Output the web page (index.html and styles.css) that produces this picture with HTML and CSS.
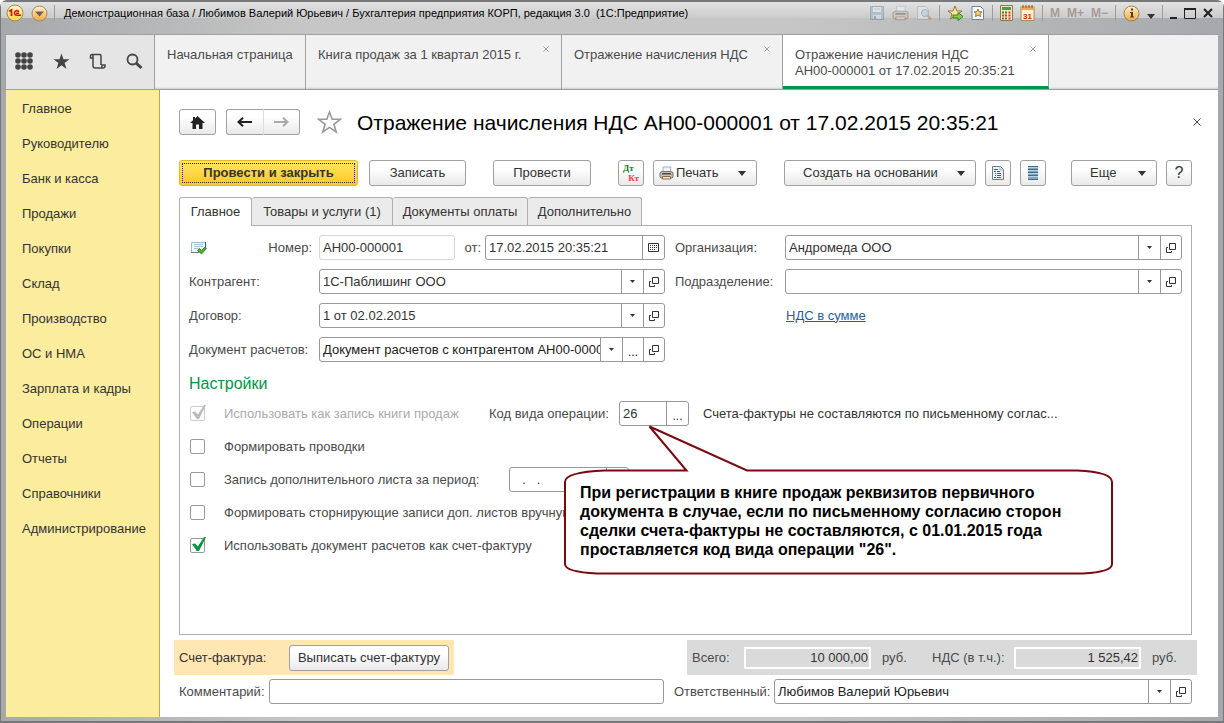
FILE: index.html
```html
<!DOCTYPE html>
<html lang="ru">
<head>
<meta charset="utf-8">
<title>Отражение начисления НДС</title>
<link rel="stylesheet" href="styles.css">
</head>
<body>
<svg width="0" height="0" class="defs" aria-hidden="true">
  <symbol id="open" viewBox="0 0 10 10"><path d="M3.500.5h6v6h-6zM2 4.500H.5v5h5V8" fill="none" stroke="#333"/></symbol>
  <symbol id="down" viewBox="0 0 5 3"><path d="M0 0h5L2.500 3z" fill="#333"/></symbol>
  <symbol id="down-big" viewBox="0 0 8 5"><path d="M0 0h8L4 5z" fill="#333"/></symbol>
  <symbol id="printer" viewBox="0 0 15 14"><path d="M4 1h8l-1 6H4z" fill="#eef4fa" stroke="#9db4c8"/><path d="M1 6.500l2-1h9l2 1V11l-1 1H2l-1-1z" fill="#c9c4bd" stroke="#77716b"/><path d="M3 7h9v1.500H3z" fill="#4b4744"/><path d="M3.500 10.500h8v2.500h-8z" fill="#f5e3d0" stroke="#8b6a50"/><path d="M12 9h1" stroke="#e08030"/></symbol>
  <symbol id="cross" viewBox="0 0 8 8"><path d="M.5.5l7 7M7.500.5l-7 7" fill="none" stroke="currentColor"/></symbol>
</svg>
<div class="window">
  <header class="titlebar">
    <svg class="logo" width="18" height="18" viewBox="0 0 18 18"><defs><linearGradient id="gy" x2="0" y2="1"><stop offset="0" stop-color="#fffbd0"/><stop offset="1" stop-color="#fbd43c"/></linearGradient><linearGradient id="go" x2="0" y2="1"><stop offset="0" stop-color="#fff0d0"/><stop offset="1" stop-color="#f5a83c"/></linearGradient></defs><circle cx="9" cy="9" r="8" fill="url(#gy)" stroke="#a08a60"/><path d="M3 7.200L5.500 6v6" fill="none" stroke="#e01010" stroke-width="1.800"/><path d="M12.800 7.700q-1.300-1.500-3-.9-1.700.9-1.300 2.700.5 1.700 2.200 1.700H15M10 9.200h3" fill="none" stroke="#e01010" stroke-width="1.500"/></svg>
    <svg class="menu-ball" width="17" height="17" viewBox="0 0 17 17"><circle cx="8.500" cy="8.500" r="7.500" fill="url(#go)" stroke="#a08a60"/><path d="M4 6.500h9l-4.500 5z" fill="#6b6252"/></svg>
    <i class="sep"></i>
    <span class="caption">Демонстрационная база / Любимов Валерий Юрьевич / Бухгалтерия предприятия КОРП, редакция 3.0&nbsp; (1С:Предприятие)</span>
    <div class="sys">
      <svg class="dim" width="16" height="16" viewBox="0 0 16 16"><path d="M1.500 1.500h13v13h-13z" fill="#8fa9bf" stroke="#56799a"/><path d="M4 2h8v5H4z" fill="#e8eef4"/><path d="M4 10h8v4H4z" fill="#dce4ea"/><path d="M5 11h2v3H5z" fill="#56799a"/><path d="M5 4h6" stroke="#9ab"/></svg>
      <svg class="dim" width="17" height="16"><use href="#printer"/></svg>
      <svg class="dim" width="16" height="16" viewBox="0 0 16 16"><path d="M1.500 1.500h8l3 3v10h-11z" fill="#e8eef4" stroke="#8aa0b4"/><circle cx="9" cy="8" r="3.500" fill="#b8d0e4" stroke="#6d8ba5"/><path d="M11.500 10.500l3.500 4" stroke="#b07840" stroke-width="2"/></svg>
      <i class="sep"></i>
      <svg width="17" height="17" viewBox="0 0 17 17"><path d="M8 1l2 5h5l-4 3 1.500 5L8 11l-4.500 3L5 9 1 6h5z" fill="#ffe79a" stroke="#94743a"/><path d="M6 10h5V7.500l5 4-5 4V13H6z" fill="#7fd04a" stroke="#3f7d22"/></svg>
      <svg width="14" height="16" viewBox="0 0 14 16"><path d="M1 1.500h8.500l3 3v10H1z" fill="#fff" stroke="#5f86a6"/><path d="M7 4l1.200 2.800h2.800L8.800 8.700l.8 3L7 10l-2.600 1.700.8-3L3 6.800h2.800z" fill="#ffd878" stroke="#94743a"/></svg>
      <i class="sep"></i>
      <svg width="13" height="16" viewBox="0 0 13 16"><path d="M.5.5h12v15H.5z" fill="#f3e9bb" stroke="#8a7a52"/><path d="M2 2h9v3H2z" fill="#4d9a4a"/><path d="M3 6.500v8M6 6.500v8" stroke="#8a5c3a" stroke-width="2" stroke-dasharray="2 1"/><path d="M9.500 6.500v8" stroke="#d33" stroke-width="2" stroke-dasharray="2 1"/></svg>
      <svg width="15" height="16" viewBox="0 0 15 16"><path d="M1 1.500h13v14H1z" fill="#fff3d2" stroke="#b08850"/><path d="M1 1h13v4H1z" fill="#e8a860"/><path d="M3 0v3M6 0v3M9 0v3M12 0v3" stroke="#7c5a30"/><text x="7.500" y="13.500" text-anchor="middle" class="cal-text">31</text></svg>
      <i class="sep"></i>
      <b class="mem">M</b><b class="mem">M+</b><b class="mem">M−</b>
      <i class="sep"></i>
      <svg width="17" height="17" viewBox="0 0 17 17"><circle cx="8.500" cy="8.500" r="7.500" fill="url(#go)" stroke="#9c8250"/><path d="M8 3.500h2v2H8zM7 7h3v4.500h1v1H7v-1h1V8H7z" fill="#4a4028"/></svg>
      <svg class="sys-down" width="8" height="5"><use href="#down-big"/></svg>
      <i class="sep"></i>
      <svg class="win-min" width="7" height="12"><path d="M0 10h7v2H0z" fill="#222"/></svg>
      <svg width="12" height="11" viewBox="0 0 12 11"><path d="M.5 1h11v9.500H.5z" fill="none" stroke="#222"/><path d="M0 1h12" stroke="#222" stroke-width="2"/></svg>
      <svg width="10" height="10" viewBox="0 0 10 10"><path d="M1 1l8 8M9 1L1 9" stroke="#222" stroke-width="2"/></svg>
    </div>
  </header>

  <div class="topbar">
    <div class="tools">
      <svg width="18" height="18" viewBox="0 0 18 18" fill="#444"><circle cx="3" cy="3" r="2.800"/><circle cx="9" cy="3" r="2.800"/><circle cx="15" cy="3" r="2.800"/><circle cx="3" cy="9" r="2.800"/><circle cx="9" cy="9" r="2.800"/><circle cx="15" cy="9" r="2.800"/><circle cx="3" cy="15" r="2.800"/><circle cx="9" cy="15" r="2.800"/><circle cx="15" cy="15" r="2.800"/></svg>
      <svg width="17" height="17" viewBox="0 0 17 17"><path d="M8.500.5l2 5.800h6l-4.900 3.700 1.900 6-5-3.700-5 3.700 1.900-6L.5 6.300h6z" fill="#444"/></svg>
      <svg width="17" height="17" viewBox="0 0 17 17" fill="none" stroke="#444" stroke-width="1.500"><path d="M4 5H1.500V3Q1.500 1.500 3 1.500h8Q12 1.500 12 3v9M4 5V2M4 5v7.500Q4 15 6 15h8q2 0 2-2v-1h-3v1.500q0 1.500-1 1.500"/></svg>
      <svg width="17" height="17" viewBox="0 0 17 17" fill="none" stroke="#444"><circle cx="6.500" cy="6.500" r="5" stroke-width="1.800"/><path d="M10 10l5.500 5" stroke-width="3"/></svg>
    </div>
    <nav class="tabs">
      <a class="tab t1" href="#">Начальная страница</a>
      <a class="tab t2" href="#">Книга продаж за 1 квартал 2015 г.<svg class="x" width="6" height="6"><use href="#cross"/></svg></a>
      <a class="tab t3" href="#">Отражение начисления НДС<svg class="x" width="6" height="6"><use href="#cross"/></svg></a>
      <a class="tab t4 active" href="#">Отражение начисления НДС<br>АН00-000001 от 17.02.2015 20:35:21<svg class="x" width="6" height="6"><use href="#cross"/></svg></a>
    </nav>
  </div>

  <div class="body">
    <nav class="side">
      <a href="#">Главное</a><a href="#">Руководителю</a><a href="#">Банк и касса</a><a href="#">Продажи</a><a href="#">Покупки</a><a href="#">Склад</a><a href="#">Производство</a><a href="#">ОС и НМА</a><a href="#">Зарплата и кадры</a><a href="#">Операции</a><a href="#">Отчеты</a><a href="#">Справочники</a><a href="#">Администрирование</a>
    </nav>

    <main>
      <div class="head">
        <button class="btn home" aria-label="Домой"><svg width="15" height="13" viewBox="0 0 15 13"><path d="M7.500 0L15 7h-2.500v6H9V8.500H6V13H2.500V7H0L3 4.200V1h2v1.400z" fill="#222"/></svg></button>
        <div class="nav">
          <button class="btn" aria-label="Назад"><svg width="15" height="10" viewBox="0 0 15 10"><path d="M1 5h14M6 .8L1.500 5 6 9.200" fill="none" stroke="#222" stroke-width="2"/></svg></button>
          <button class="btn" aria-label="Вперед"><svg width="15" height="10" viewBox="0 0 15 10"><path d="M0 5h14M9 .8L13.500 5 9 9.200" fill="none" stroke="#aaa" stroke-width="2"/></svg></button>
        </div>
        <svg class="fav" width="25" height="24" viewBox="0 0 25 24"><path d="M12.500 2l2.700 7.300h8l-6.300 5 2.300 7.700-6.700-4.600L5.800 22l2.300-7.700-6.300-5h8z" fill="#fff" stroke="#999" stroke-width="1.600"/></svg>
        <h1>Отражение начисления НДС АН00-000001 от 17.02.2015 20:35:21</h1>
        <button class="close" aria-label="Закрыть"><svg width="8" height="8"><use href="#cross"/></svg></button>
      </div>

      <div class="toolbar">
        <button class="btn primary">Провести и закрыть</button>
        <button class="btn save">Записать</button>
        <button class="btn post">Провести</button>
        <button class="btn sq dtkt" aria-label="Дт Кт"><span class="dt">Дт</span><span class="kt">Кт</span></button>
        <button class="btn print"><svg width="15" height="14"><use href="#printer"/></svg>Печать<svg class="arr" width="8" height="5"><use href="#down-big"/></svg></button>
        <button class="btn create">Создать на основании<svg class="arr" width="8" height="5"><use href="#down-big"/></svg></button>
        <button class="btn sq" aria-label="Отчет"><svg width="12" height="14" viewBox="0 0 12 14"><path d="M.5.5h8l3 3v10H.5z" fill="#e9f2f8" stroke="#5d8199"/><path d="M8 0v4h4" fill="none" stroke="#8fb0c5"/><path d="M2 3.500h4M2 5.500h2m1 0h3M3 7.500h1m1 0h4M3 9.500h1m1 0h4M2 11.500h2m1 0h4" stroke="#3d637c"/></svg></button>
        <button class="btn sq" aria-label="Список"><svg width="10" height="14" viewBox="0 0 10 14"><path d="M0 0h10v14H0z" fill="#7fa9c2"/><path d="M0 .5h10M0 3.500h10M0 6.500h10M0 9.500h10M0 13.500h10" stroke="#446a84"/><path d="M0 1.500h10M0 4.500h10M0 7.500h10M0 10.500h10" stroke="#b7d3e3"/></svg></button>
        <button class="btn more">Еще<svg class="arr" width="8" height="5"><use href="#down-big"/></svg></button>
        <button class="btn sq help">?</button>
      </div>

      <div class="ptabs">
        <button class="pt p1 on">Главное</button><button class="pt p2">Товары и услуги (1)</button><button class="pt p3">Документы оплаты</button><button class="pt p4">Дополнительно</button>
      </div>

      <section class="panel">
        <div class="cols">
          <div class="col left">
            <div class="row">
              <span class="numlabel"><svg width="16" height="14" viewBox="0 0 16 14"><path d="M.5 11.500v-10h14v6" fill="#eef6fb" stroke="#9fbccb"/><path d="M14.500 1v7" stroke="#456"/><path d="M0 11.500h8" stroke="#678"/><path d="M3 3.500h9M3 5.500h9M3 7.500h5" stroke="#a8c4d2"/><path d="M6.500 9.500l2-2 2 2 3.500-3.500 1.500 1.500-5 5.500z" fill="#4cae2c" stroke="#2e7d1a" stroke-width=".8"/></svg><label for="num">Номер:</label></span>
              <span class="field ro num"><input id="num" value="АН00-000001" readonly></span>
              <label class="from" for="date">от:</label>
              <span class="field grow"><input id="date" value="17.02.2015 20:35:21"><button aria-label="Календарь"><svg width="11" height="9" viewBox="0 0 11 9"><path d="M.5.5h10v8H.5z" fill="none" stroke="#333"/><path d="M2 2.500h7M2 4.500h7M2 6.500h5" stroke="#333" stroke-dasharray="1 1"/></svg></button></span>
            </div>
            <div class="row"><label for="contr">Контрагент:</label><span class="field grow"><input id="contr" value="1С-Паблишинг ООО"><button aria-label="Выбрать"><svg width="5" height="3"><use href="#down"/></svg></button><button aria-label="Открыть"><svg width="10" height="10"><use href="#open"/></svg></button></span></div>
            <div class="row"><label for="dog">Договор:</label><span class="field grow"><input id="dog" value="1 от 02.02.2015"><button aria-label="Выбрать"><svg width="5" height="3"><use href="#down"/></svg></button><button aria-label="Открыть"><svg width="10" height="10"><use href="#open"/></svg></button></span></div>
            <div class="row"><label for="doc">Документ расчетов:</label><span class="field grow dark"><input id="doc" value="Документ расчетов с контрагентом АН00-000001"><button aria-label="Выбрать"><svg width="5" height="3"><use href="#down"/></svg></button><button class="dots">...</button><button aria-label="Открыть"><svg width="10" height="10"><use href="#open"/></svg></button></span></div>
          </div>
          <div class="col right">
            <div class="row"><label for="org">Организация:</label><span class="field grow"><input id="org" value="Андромеда ООО"><button aria-label="Выбрать"><svg width="5" height="3"><use href="#down"/></svg></button><button aria-label="Открыть"><svg width="10" height="10"><use href="#open"/></svg></button></span></div>
            <div class="row"><label for="dep">Подразделение:</label><span class="field grow"><input id="dep"><button aria-label="Выбрать"><svg width="5" height="3"><use href="#down"/></svg></button><button aria-label="Открыть"><svg width="10" height="10"><use href="#open"/></svg></button></span></div>
            <div class="row link-row"><a href="#">НДС в сумме</a></div>
          </div>
        </div>

        <h2>Настройки</h2>
        <div class="settings">
          <div class="srow">
            <label class="check off first"><input type="checkbox" checked disabled>Использовать как запись книги продаж</label>
            <label class="codelabel" for="code">Код вида операции:</label>
            <span class="field code"><input id="code" value="26"><button class="dots">...</button></span>
            <span class="codetext">Счета-фактуры не составляются по письменному соглас...</span>
          </div>
          <div class="srow"><label class="check"><input type="checkbox">Формировать проводки</label></div>
          <div class="srow"><label class="check third"><input type="checkbox">Запись дополнительного листа за период:</label><span class="field period"><input aria-label="Период" value="  .   ."><button aria-label="Календарь"></button></span></div>
          <div class="srow"><label class="check"><input type="checkbox">Формировать сторнирующие записи доп. листов вручную</label></div>
          <div class="srow"><label class="check"><input type="checkbox" checked>Использовать документ расчетов как счет-фактуру</label></div>
          <div class="callout">
            <svg width="552" height="152" viewBox="0 0 552 152"><path d="M86.500 2.500L123.500 46.500H42Q2 48 2 58V140Q2 148 34 149.500H520Q549 148 549 140V58Q549 48 514 46.500H184z" fill="#fff" stroke="#7b0a10" stroke-width="2"/></svg>
            <p>При регистрации в книге продаж реквизитов первичного<br>документа в случае, если по письменному согласию сторон<br>сделки счета-фактуры не составляются, с 01.01.2015 года<br>проставляется код вида операции "26".</p>
          </div>
        </div>
      </section>

      <div class="totals">
        <div class="invoice"><span>Счет-фактура:</span><button class="btn">Выписать счет-фактуру</button></div>
        <div class="sums"><label class="l1" for="sum">Всего:</label><input id="sum" value="10 000,00" readonly><span class="r1">руб.</span><label class="l2" for="vat">НДС (в т.ч.):</label><input id="vat" value="1 525,42" readonly><span>руб.</span></div>
      </div>
      <div class="bottom">
        <div class="row comment"><label for="com">Комментарий:</label><span class="field grow"><input id="com"></span></div>
        <div class="row resp"><label for="resp">Ответственный:</label><span class="field grow dark"><input id="resp" value="Любимов Валерий Юрьевич"><button aria-label="Выбрать"><svg width="5" height="3"><use href="#down"/></svg></button><button aria-label="Открыть"><svg width="10" height="10"><use href="#open"/></svg></button></span></div>
      </div>
    </main>
  </div>
</div>
</body>
</html>
```
FILE: styles.css
```css
* { box-sizing: border-box; }
body { margin: 0; background: #fff; font: 13px/16px "Liberation Sans", Arial, sans-serif; color: #4a4a4a; }
button, input { font: inherit; color: inherit; }
a { color: inherit; text-decoration: none; }
svg { flex: none; display: block; }
.defs { position: absolute; }
.window { min-height: 100vh; display: flex; flex-direction: column; border: 1px solid #77787a; border-width: 2px 1px; border-radius: 7px 7px 0 0; padding: 0 5px 4px 5px; background: linear-gradient(90deg, #a6a8ab, #c6c6c6 25%, #c6c6c6 65%, #a6a8ab); }

.titlebar { display: flex; align-items: center; height: 32px; margin: 0 -5px; padding: 0 10px 10px 5px; background: linear-gradient(180deg, #e2e2e2, #cbcbcb 16px, #fff0 16px); }
.menu-ball { margin-left: 7px; }
.sep { width: 1px; height: 16px; background: #9c9c9c; flex: none; }
.titlebar > .sep { margin: 0 9px 0 6px; }
.caption { color: #000; font-size: 11px; white-space: nowrap; }
.sys { margin-left: auto; display: flex; align-items: center; gap: 7px; }
.dim { opacity: .45; }
.cal-text { font: bold 8px "Liberation Sans", sans-serif; fill: #e02020; }
.mem { color: #a89c98; font-size: 12px; }
.sys-down { margin-top: 7px; }

.topbar { display: flex; border: 1px solid #a0a0a0; border-width: 1px 0 1px 1px; height: 56px; background: #f1f1f1; margin-left: -1px; }
.tools { width: 148px; display: flex; align-items: center; justify-content: space-between; padding: 0 11px 2px 9px; background: #e5e5e5; }
.tabs { display: flex; flex: 1; border-left: 1px solid #a0a0a0; box-shadow: inset 0 -3px 2px -2px #ccc; }
.tab { position: relative; padding: 12px 12px 0; border-right: 1px solid #a0a0a0; white-space: nowrap; }
.t1 { width: 151px; }
.t2 { width: 256px; }
.t3 { width: 221px; }
.t4 { width: 266px; }
.tab.active { background: #fff; border-bottom: 3px solid #009646; }
.x { position: absolute; top: 11px; right: 12px; color: #888; }

.body { flex: 1; display: flex; background: #fff; }
.side { width: 154px; flex: none; display: flex; flex-direction: column; padding-top: 2px; background: #fbec9e; border-right: 1px solid #c4a83c; color: #333; }
.side a { padding: 9px 0 10px 16px; }
main { flex: 1; min-width: 0; display: flex; flex-direction: column; padding: 18px 26px 13px 19px; }

.btn { display: inline-flex; align-items: center; justify-content: center; height: 26px; padding: 0 10px; border: 1px solid #a0a0a0; border-radius: 3px; background: linear-gradient(#fff 30%, #e9e9e9); color: #333; white-space: nowrap; }
.head { display: flex; align-items: center; height: 28px; }
.home { width: 37px; margin-right: 10px; }
.nav { display: flex; width: 74px; }
.nav .btn { flex: 1; }
.nav .btn:first-child { border-radius: 3px 0 0 3px; border-right-color: #ddd; }
.nav .btn:last-child { border-radius: 0 3px 3px 0; border-left: 0; }
.fav { margin: 0 15px 0 17px; }
h1 { margin: 1px 0 0; font-size: 21px; line-height: 24px; font-weight: normal; color: #000; white-space: nowrap; }
.close { margin: 0 -9px 0 auto; padding: 0; border: 0; background: none; color: #444; }

.toolbar { display: flex; margin-top: 24px; }
.primary { width: 179px; margin-right: 11px; font-weight: bold; border-color: #e8b628; background: linear-gradient(#ffe760, #fbc926); outline: 1px dotted #222; outline-offset: -4px; }
.save { width: 97px; margin-right: 27px; }
.post { width: 98px; margin-right: 27px; }
.sq { width: 26px; padding: 0; margin-right: 9px; }
.dtkt { display: flex; flex-direction: column; font: bold 9px/10px "Liberation Serif", serif; }
.dt { color: #187a10; align-self: flex-start; padding-left: 4px; }
.kt { color: #f03c3c; align-self: flex-end; padding-right: 4px; }
.print { width: 104px; margin-right: 27px; padding: 0 10px 0 5px; }
.print svg:first-child { margin-right: 2px; }
.arr { margin-left: auto; }
.create { width: 192px; margin-right: 9px; padding: 0 10px 0 18px; }
.more { width: 86px; margin: 0 9px 0 auto; padding: 0 10px 0 18px; }
.help { margin: 0; font-size: 16px; }

.ptabs { display: flex; margin-top: 11px; }
.pt { height: 28px; padding: 0; border: 1px solid #b0b0b0; border-left-width: 0; border-bottom: 0; border-radius: 3px 3px 0 0; background: #ebebeb; color: #333; }
.pt.on { position: relative; border-left-width: 1px; background: #fff; height: 29px; margin-bottom: -1px; }
.p1 { width: 73px; }
.p2 { width: 141px; }
.p3 { width: 135px; }
.p4 { width: 114px; }
.panel { flex: 1; border: 1px solid #b0b0b0; padding: 9px 9px 0; }
.cols { display: grid; grid-template-columns: 476px 1fr; gap: 10px; }
.col { display: grid; gap: 9px; align-content: start; }
.row { display: flex; align-items: center; height: 25px; min-width: 0; }
.left > .row > :first-child { width: 130px; flex: none; }
.right > .row > label { width: 110px; flex: none; }
.numlabel { display: flex; align-items: center; justify-content: space-between; padding: 0 7px 0 2px; }
.from { width: 30px; text-align: right; padding-right: 4px; }
.field { display: flex; height: 25px; border: 1px solid #999; border-radius: 3px; background: #fff; color: #333; overflow: hidden; }
.field input { flex: 1; min-width: 0; width: 100%; border: 0; padding: 0 0 0 3px; background: none; outline: 0; }
.field button { width: 22px; flex: none; padding: 0; border: 0; border-left: 1px solid #999; background: none; display: flex; align-items: center; justify-content: center; }
.field button + button { width: 21px; }
.field .dots { padding-top: 4px; font-size: 12px; }
.dark { color: #222; }
.grow { flex: 1; min-width: 0; }
.ro { border-color: #d6d6d6; }
.num { width: 136px; }
.link-row { padding-left: 111px; }
.link-row a { color: #1a5fa8; text-decoration: underline; }
h2 { margin: 12px 0 7px; font-size: 16px; line-height: 20px; font-weight: normal; color: #009646; }

.settings { position: relative; display: grid; gap: 8px; }
.srow { display: flex; align-items: center; height: 25px; white-space: nowrap; }
.check { display: flex; align-items: center; }
.check input { appearance: none; position: relative; width: 15px; height: 15px; margin: 0 19px 0 1px; border: 1px solid #999; border-radius: 2px; background: #fff; }
.check input:checked::after { content: ""; position: absolute; left: 1px; top: -2px; width: 14px; height: 14px; background: #009646; clip-path: polygon(0 50%, 22% 46%, 42% 68%, 86% 0, 100% 0, 50% 100%, 34% 100%); }
.off { color: #aaa; }
.off input { border-color: #ccc; }
.check.off input:checked::after { background: #bbb; }
.first { width: 300px; }
.codelabel { width: 130px; }
.code { width: 70px; margin-right: 14px; }
.third { width: 320px; }
.period { width: 120px; }
.period input { padding-left: 5px; white-space: pre; }
.codetext { color: #333; }
.callout { position: absolute; left: 374px; top: 23px; width: 552px; }
.callout p { position: absolute; left: 17px; top: 59px; margin: 0; font-size: 16px; line-height: 19px; font-weight: bold; color: #000; white-space: nowrap; }

.totals { display: flex; justify-content: space-between; margin: 5px -5px 0 -5px; height: 35px; }
.invoice { display: flex; align-items: center; justify-content: space-between; width: 280px; padding: 0 5px; background: #ffe6b3; color: #333; }
.invoice .btn { width: 160px; }
.sums { display: flex; align-items: center; width: 510px; padding-left: 5px; background: #dadada; }
.sums input { width: 127px; height: 22px; padding: 0 1px; border: 2px solid #fff; background: #dadada; text-align: right; color: #333; margin-right: 11px; }
.l1 { width: 52px; }
.l2 { width: 82px; }
.r1 { width: 50px; }
.bottom { display: flex; gap: 10px; margin-top: 4px; }
.comment { width: 485px; }
.comment label { width: 90px; }
.resp { flex: 1; }
.resp label { width: 100px; }
```
